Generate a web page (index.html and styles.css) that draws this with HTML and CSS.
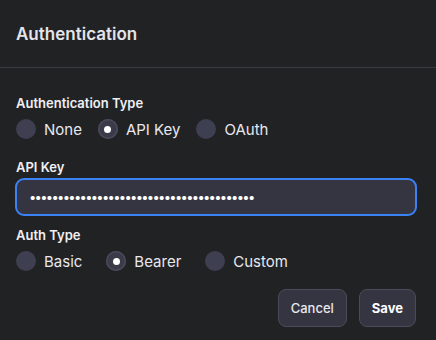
FILE: index.html
```html
<!DOCTYPE html>
<html>
<head>
<meta charset="utf-8">
<link rel="stylesheet" href="styles.css">
</head>
<body>
<div class="dialog">
  <div class="header">
    <h2 class="title">Authentication</h2>
  </div>
  <div class="body">
    <div class="field">
      <div class="label">Authentication Type</div>
      <div class="radios tight">
        <label class="radio"><span class="dot"></span>None</label>
        <label class="radio checked"><span class="dot"></span>API Key</label>
        <label class="radio"><span class="dot"></span>OAuth</label>
      </div>
    </div>
    <div class="field">
      <div class="label">API Key</div>
      <div class="input">••••••••••••••••••••••••••••••••••••••••</div>
    </div>
    <div class="field">
      <div class="label">Auth Type</div>
      <div class="radios wide">
        <label class="radio"><span class="dot"></span>Basic</label>
        <label class="radio checked"><span class="dot"></span>Bearer</label>
        <label class="radio"><span class="dot"></span>Custom</label>
      </div>
    </div>
    <div class="actions">
      <button class="btn">Cancel</button>
      <button class="btn primary">Save</button>
    </div>
  </div>
</div>
</body>
</html>
```
FILE: styles.css
```css
* { box-sizing: border-box; }
html, body { margin: 0; padding: 0; }
body {
  background: #212224;
  font-family: Inter, "Liberation Sans", sans-serif;
  color: #ececf1;
  width: 436px;
  height: 340px;
  overflow: hidden;
}
.header {
  height: 68px;
  padding: 0 16px;
  display: flex;
  align-items: center;
  border-bottom: 1px solid #3a3b3e;
}
.title {
  margin: 0;
  font-size: 17px;
  font-weight: 600;
  color: #e4e4ea;
}
.body {
  padding: 26px 20px 0 16px;
  display: flex;
  flex-direction: column;
}
.field { display: flex; flex-direction: column; }
.field + .field { margin-top: 18px; }
.field.after-input { margin-top: 10px; }
.label {
  font-size: 13px;
  font-weight: 600;
  line-height: 18px;
  color: #f0f0f4;
}
.radios {
  display: flex;
  margin-top: 6px;
}
.radios.tight { gap: 16px; }
.radios.wide { gap: 24px; }
.radio {
  display: flex;
  align-items: center;
  font-size: 15px;
  color: #e8e8ee;
  height: 22px;
}
.dot {
  width: 20px;
  height: 20px;
  border-radius: 50%;
  background: #3f3f52;
  margin-right: 8px;
  display: flex;
  align-items: center;
  justify-content: center;
}
.checked .dot {
  background: #3a3a48;
  box-shadow: inset 0 0 0 1.5px #4a4a5c;
}
.checked .dot::after {
  content: "";
  width: 7px;
  height: 7px;
  border-radius: 50%;
  background: #ffffff;
}
.input {
  margin: 2px -1px 0 -1px;
  height: 38px;
  border: 2px solid #3b82f6;
  border-radius: 9px;
  background: #353541;
  color: #ffffff;
  font-size: 13px;
  display: flex;
  align-items: center;
  padding: 0 12px;
  letter-spacing: -1.7px;
}
.field:nth-child(3) { margin-top: 10px; }
.actions {
  margin-top: 17px;
  display: flex;
  justify-content: flex-end;
  gap: 12px;
}
.btn {
  font-family: inherit;
  height: 38px;
  padding: 0 12px;
  border: 1px solid #4a4b5a;
  border-radius: 8px;
  background: #353541;
  color: #e8e8ee;
  font-size: 13px;
  font-weight: 500;
}
.btn.primary { font-weight: 700; color: #ffffff; }
```
